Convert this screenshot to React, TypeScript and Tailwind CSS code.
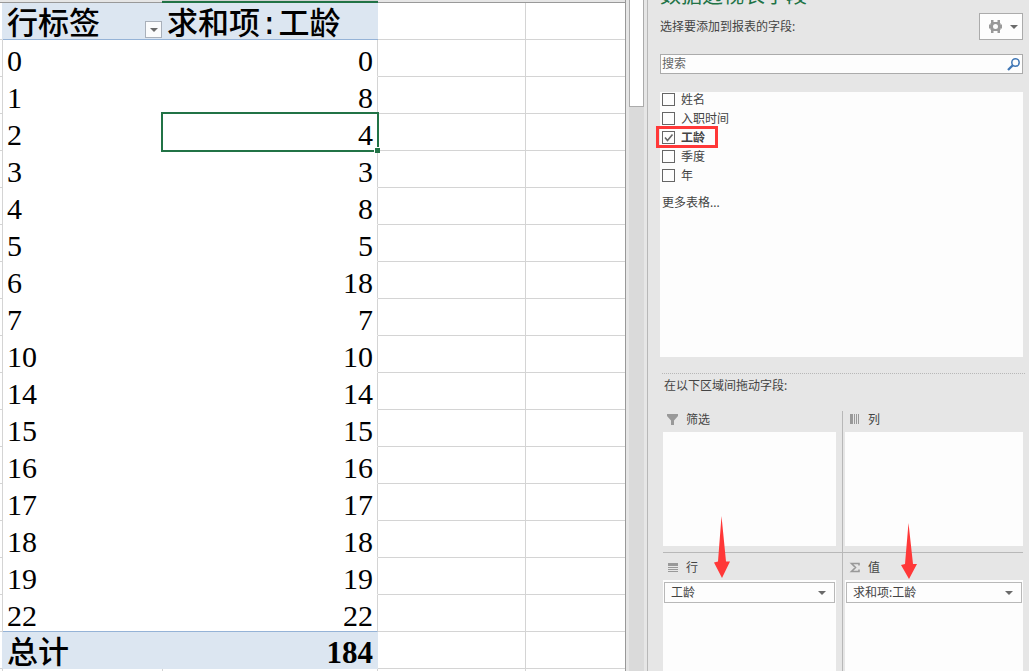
import { useState } from "react";
import type { ReactNode } from "react";

const rows = [
  { label: "0", value: 0 },
  { label: "1", value: 8 },
  { label: "2", value: 4 },
  { label: "3", value: 3 },
  { label: "4", value: 8 },
  { label: "5", value: 5 },
  { label: "6", value: 18 },
  { label: "7", value: 7 },
  { label: "10", value: 10 },
  { label: "14", value: 14 },
  { label: "15", value: 15 },
  { label: "16", value: 16 },
  { label: "17", value: 17 },
  { label: "18", value: 18 },
  { label: "19", value: 19 },
  { label: "22", value: 22 },
];

const fields = ["姓名", "入职时间", "工龄", "季度", "年"];

function Caret({ className = "" }: { className?: string }) {
  return (
    <svg width="8" height="4" viewBox="0 0 8 4" className={className} aria-hidden="true">
      <path d="M0 0h8L4 4z" fill="#6a6a6a" />
    </svg>
  );
}

function RedArrow({ className }: { className: string }) {
  return (
    <svg viewBox="0 0 16 62" className={className} preserveAspectRatio="none" aria-hidden="true">
      <path d="M7.5 0L12 45.5H16L8 62L0 46.5L4 45.5z" fill="#ff3838" />
    </svg>
  );
}

function FilterIcon() {
  return (
    <svg width="12" height="12" viewBox="0 0 12 12" fill="#999" aria-hidden="true">
      <path d="M0 0h11v2L7 6.500V11H4V6.500L0 2z" />
    </svg>
  );
}

function ColumnsIcon() {
  return (
    <svg width="12" height="12" viewBox="0 0 12 12" fill="#999" aria-hidden="true">
      <path d="M1 0h3v10H1zM5 0h1v10H5zM7 0h1v10H7zM9 0h1v10H9z" />
    </svg>
  );
}

function RowsIcon() {
  return (
    <svg width="12" height="12" viewBox="0 0 12 12" fill="#999" aria-hidden="true">
      <path d="M1 1h10v3H1zM1 5h10v1H1zM1 7h10v1H1zM1 9h10v1H1z" />
    </svg>
  );
}

function SigmaIcon() {
  return (
    <svg width="12" height="12" viewBox="0 0 12 12" fill="none" stroke="#999" aria-hidden="true">
      <path d="M10 3.500V1.500H2.500L6.500 5.500L2.500 9.500H10V7.500" strokeWidth="1.600" />
    </svg>
  );
}

function Area({ icon, title, className, children }: { icon: ReactNode; title: string; className: string; children?: ReactNode }) {
  return (
    <section className={`flex flex-col ${className}`}>
      <h3 className="flex h-[17px] items-center gap-[7px] pl-1 mb-1">
        {icon}
        <span>{title}</span>
      </h3>
      <div className="flex-1 bg-[#fdfdfd] px-px pt-0.5">{children}</div>
    </section>
  );
}

function FieldButton({ name }: { name: string }) {
  return (
    <button
      type="button"
      aria-haspopup="menu"
      className="flex h-[21px] w-full items-center justify-between border border-[#b8b8b8] bg-[#fdfdfd] pl-1.5 pr-2"
    >
      {name}
      <Caret />
    </button>
  );
}

function Sheet() {
  return (
    <div className="min-w-0 flex-1 overflow-hidden border-r border-[#999] bg-white font-['Liberation_Serif','Noto_Sans_CJK_SC',serif] text-[30px] leading-[30px] text-black">
      <div className="flex h-[3px] bg-[#e6e6e6]">
        <div className="w-[162px] border-b border-[#999]" />
        <div className="w-[216px] border-b-2 border-[#217346] bg-[#d2d2d2]" />
        <div className="flex-1 border-b border-[#999]" />
      </div>
      <table className="w-full table-fixed border-separate border-spacing-0">
        <colgroup>
          <col className="w-[3px]" />
          <col className="w-[160px]" />
          <col className="w-[215px]" />
          <col className="w-[148px]" />
          <col />
        </colgroup>
        <thead className="font-['Liberation_Mono','Noto_Sans_CJK_SC',monospace] text-[31px] leading-[26px]">
          <tr className="h-[37px]">
            <td className="border-b border-r border-b-[#d4d4d4] border-r-[#dce6f1] p-0" />
            <th scope="col" className="border-b border-[#95b3d7] bg-[#dce6f1] p-0 text-left font-medium">
              <div className="flex h-9 items-end justify-between pl-1">
                <span>行标签</span>
                <button type="button" aria-label="筛选行标签" className="mr-px mb-px flex h-[17px] w-[17px] items-center justify-center border border-[#a9b0ba] bg-[#fafbfc]">
                  <Caret />
                </button>
              </div>
            </th>
            <th scope="col" className="border-b border-[#95b3d7] bg-[#dce6f1] pt-2.5 pb-0 pl-1 pr-0 text-left font-medium whitespace-nowrap">
              求和项:工龄
            </th>
            <td className="border-b border-r border-[#d4d4d4] p-0" />
            <td className="border-b border-[#d4d4d4] p-0" />
          </tr>
        </thead>
        <tbody>
          {rows.map((row, i) => (
            <tr key={row.label} className="h-[37px]">
              <td className="border-b border-r border-[#d4d4d4] p-0" />
              <th
                scope="row"
                className={`border-b px-1 pt-1.5 pb-0 text-left font-normal ${i === rows.length - 1 ? "border-[#95b3d7]" : "border-white"}`}
              >
                {row.label}
              </th>
              <td
                className={`relative border-b border-r border-r-[#d4d4d4] px-1 pt-1.5 pb-0 text-right ${i === rows.length - 1 ? "border-b-[#95b3d7]" : "border-b-white"}`}
              >
                {row.value}
                {row.label === "2" && (
                  <div className="absolute -inset-0.5 z-10 border-2 border-[#217346]">
                    <div className="absolute -right-[3px] -bottom-[3px] h-1.5 w-1.5 border-t border-l border-white bg-[#217346]" />
                  </div>
                )}
              </td>
              <td className="border-b border-r border-[#d4d4d4] p-0" />
              <td className="border-b border-[#d4d4d4] p-0" />
            </tr>
          ))}
        </tbody>
        <tfoot>
          <tr className="h-[37px] text-[31px]">
            <td className="border-b border-r border-b-[#d4d4d4] border-r-[#dce6f1] p-0" />
            <th scope="row" className="border-b border-[#dce6f1] bg-[#dce6f1] px-1 pt-1.5 pb-0 text-left font-medium">
              总计
            </th>
            <td className="border-b border-r border-[#dce6f1] bg-[#dce6f1] px-1 pt-1.5 pb-0 text-right font-bold">184</td>
            <td className="border-b border-r border-[#d4d4d4] p-0" />
            <td className="border-b border-[#d4d4d4] p-0" />
          </tr>
          <tr className="h-[37px]">
            <td className="border-b border-r border-[#d4d4d4] p-0" />
            <td className="border-b border-r border-[#d4d4d4] p-0" />
            <td className="border-b border-r border-[#d4d4d4] p-0" />
            <td className="border-b border-r border-[#d4d4d4] p-0" />
            <td className="border-b border-[#d4d4d4] p-0" />
          </tr>
        </tfoot>
      </table>
    </div>
  );
}

function FieldPane() {
  const [checked, setChecked] = useState<string[]>(["工龄"]);

  const toggle = (name: string) =>
    setChecked((prev) => (prev.includes(name) ? prev.filter((n) => n !== name) : [...prev, name]));

  return (
    <aside className="flex w-[381px] shrink-0 flex-col pl-3 pr-1.5 font-['Noto_Sans','Noto_Sans_CJK_SC',sans-serif] text-xs leading-4 text-[#444]">
      <div className="flex h-1.5 items-end overflow-hidden">
        <h2 className="text-[21px] leading-6 text-[#217346]">数据透视表字段</h2>
      </div>

      <div className="mt-[7px] flex items-center justify-between">
        <p>选择要添加到报表的字段:</p>
        <button type="button" aria-label="工具" className="flex h-[27px] w-11 items-center justify-between border border-[#ababab] bg-[#fdfdfd] pl-2 pr-1">
          <svg width="15" height="14" viewBox="0 0 15 14" aria-hidden="true">
            <path
              fill="#999"
              fillRule="evenodd"
              d="M3 0H5.500V2H9.500V0H12V3H12.500V4.500H14V8.500H12.500V10H12V13H9.500V11H5.500V13H3V10H2.500V8.500H1V4.500H2.500V3H3zM7.500 4A2.500 2.500 0 1 0 7.500 9A2.500 2.500 0 1 0 7.500 4z"
            />
          </svg>
          <Caret />
        </button>
      </div>

      <div className="mt-3.5 flex h-5 items-center border border-[#ababab] bg-[#fdfdfd] pr-0.5">
        <input
          type="search"
          aria-label="搜索"
          placeholder="搜索"
          className="h-4 min-w-0 flex-1 bg-transparent pl-px outline-none placeholder:text-[#666]"
        />
        <svg width="13" height="13" viewBox="0 0 13 13" fill="none" stroke="#3f76b5" aria-hidden="true">
          <circle cx="8.500" cy="4.500" r="3.700" strokeWidth="1.500" />
          <path d="M5.800 7.200L1 12" strokeWidth="2.300" />
        </svg>
      </div>

      <div className="mt-[18px] h-[265px] shrink-0 bg-[#fdfdfd] pl-0.5">
        <ul>
          {fields.map((name) => {
            const on = checked.includes(name);
            return (
              <li key={name} className="relative h-[19px]">
                <label className="flex items-start gap-1.5">
                  <span className="relative mt-px flex">
                    <input
                      type="checkbox"
                      checked={on}
                      onChange={() => toggle(name)}
                      className="h-[13px] w-[13px] appearance-none border border-[#666] bg-[#fdfdfd]"
                    />
                    {on && (
                      <svg viewBox="0 0 13 13" className="pointer-events-none absolute inset-0" fill="none" stroke="#666" aria-hidden="true">
                        <path d="M3 6.500L5.500 9.500L10.500 3.500" strokeWidth="1.600" />
                      </svg>
                    )}
                  </span>
                  <span className={on ? "font-bold" : ""}>{name}</span>
                </label>
                {name === "工龄" && (
                  <div className="pointer-events-none absolute -top-1 -left-1.5 h-[22px] w-[62px] border-3 border-[#ff3838]" />
                )}
              </li>
            );
          })}
        </ul>
        <a href="#more" className="mt-2 block">
          更多表格...
        </a>
      </div>

      <div className="mt-4 -mr-0.5 ml-0.5 border-t border-dotted border-[#b8b8b8] pt-1 pl-0.5">在以下区域间拖动字段:</div>

      <div className="relative mt-[17px] ml-[3px] grid flex-1 grid-cols-2 grid-rows-[142px_1fr]">
        <Area icon={<FilterIcon />} title="筛选" className="border-r border-b border-[#b8b8b8] pr-1.5 pb-1.5" />
        <Area icon={<ColumnsIcon />} title="列" className="border-b border-[#b8b8b8] pb-1.5 pl-0.5" />
        <Area icon={<RowsIcon />} title="行" className="border-r border-[#b8b8b8] pt-1.5 pr-1.5">
          <FieldButton name="工龄" />
        </Area>
        <Area icon={<SigmaIcon />} title="值" className="pt-1.5 pl-0.5">
          <FieldButton name="求和项:工龄" />
        </Area>
        <RedArrow className="pointer-events-none absolute top-[105px] left-[51px] h-[62px] w-4" />
        <RedArrow className="pointer-events-none absolute top-28 left-[238px] h-14 w-4" />
      </div>
    </aside>
  );
}

export default function App() {
  return (
    <div className="flex h-screen overflow-hidden bg-[#e6e6e6]">
      <Sheet />
      <div className="flex w-[22px] shrink-0 border-r border-[#b8b8b8] pl-[3px]">
        <div className="w-[15px] bg-[#dadada]">
          <div className="h-[107px] border border-t-0 border-[#ababab] bg-white" />
        </div>
      </div>
      <FieldPane />
    </div>
  );
}
